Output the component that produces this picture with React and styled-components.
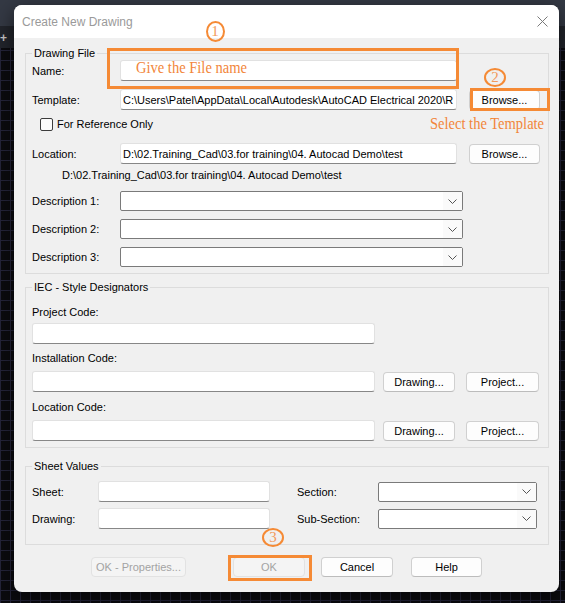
import React from "react";
import styled, { createGlobalStyle } from "styled-components";

const ORANGE = "#f58a35";
const UI_FONT = `"Liberation Sans", Arial, sans-serif`;
const NOTE_FONT = `"Liberation Serif", "Times New Roman", serif`;

const GlobalStyle = createGlobalStyle`
  html, body {
    margin: 0;
    padding: 0;
  }
  body {
    width: 565px;
    height: 603px;
    overflow: hidden;
    background-color: #0b0b0f;
    background-image:
      linear-gradient(to bottom, #343944 0, #343944 26px, #22252c 26px, #22252c 48px, transparent 48px),
      repeating-linear-gradient(to right, #24243a 0 1px, transparent 1px 10px),
      repeating-linear-gradient(to bottom, #24243a 0 1px, transparent 1px 10px);
    font-family: ${UI_FONT};
  }
`;

const Desktop = styled.div`
  position: relative;
  width: 565px;
  height: 603px;
  overflow: hidden;
`;

const PlusTab = styled.span`
  position: absolute;
  left: 0;
  top: 31px;
  color: #c8c8c8;
  font: bold 12px "Liberation Sans", sans-serif;
`;

const Dialog = styled.div`
  position: relative;
  width: 545px;
  margin: 5px 0 0 14px;
  background: #f0f0f0;
  border-radius: 8px;
  box-shadow: 0 6px 20px rgba(0, 0, 0, 0.6);
`;

const TitleBar = styled.div`
  height: 33px;
  display: flex;
  align-items: center;
  justify-content: space-between;
  padding: 0 11px 0 8px;
  background: #ffffff;
  border-radius: 8px 8px 0 0;
`;

const Title = styled.span`
  font-size: 12px;
  color: #9a9a9a;
`;

const Body = styled.div`
  padding: 8px 10px 15px 11px;
`;

const Group = styled.fieldset`
  margin: ${props => props.$mt || 0}px 0 0 0;
  padding: 0 6px ${props => props.$pb}px 6px;
  border: 1px solid #dcdcdc;
  min-width: 0;
`;

const Legend = styled.legend`
  padding: 0 2px;
  font-size: 11px;
  line-height: 14px;
  color: #000;
`;

const Row = styled.div`
  display: flex;
  align-items: center;
  height: ${props => props.$h || 21}px;
  margin-top: ${props => props.$mt || 0}px;
`;

const Label = styled.span`
  flex: none;
  width: ${props => (props.$w ? `${props.$w}px` : "auto")};
  margin-left: ${props => props.$ml || 0}px;
  font-size: 11px;
  line-height: 14px;
  color: #000;
  white-space: nowrap;
`;

const BlockLabel = styled.div`
  margin-top: ${props => props.$mt || 0}px;
  font-size: 11px;
  line-height: 14px;
  color: #000;
`;

const TextBox = styled.input`
  flex: none;
  box-sizing: border-box;
  width: ${props => props.$w}px;
  height: 21px;
  margin: 0;
  padding: 0 2px;
  background: #ffffff;
  border: 1px solid #e1e1e1;
  border-bottom-color: #878787;
  border-radius: 3px;
  font-family: ${UI_FONT};
  font-size: 11px;
  color: #000;
  outline: none;
`;

const Combo = styled.div`
  flex: none;
  display: flex;
  justify-content: flex-end;
  box-sizing: border-box;
  width: ${props => props.$w}px;
  height: 20px;
  margin-left: ${props => props.$ml || 0}px;
  background: #ffffff;
  border: 1px solid #7a7a7a;
  border-radius: 2px;
`;

const ComboArrow = styled.div`
  width: 19px;
  display: flex;
  align-items: center;
  justify-content: center;
  background: #fafafa;
`;

const Button = styled.button`
  flex: none;
  box-sizing: border-box;
  width: ${props => props.$w}px;
  height: 20px;
  margin: 0 0 0 ${props => props.$ml || 0}px;
  padding: 0;
  background: ${props => (props.disabled ? "#f4f4f4" : "#fdfdfd")};
  border: 1px solid ${props => (props.disabled ? "#e2e2e2" : "#d0d0d0")};
  border-bottom-color: ${props => (props.disabled ? "#e2e2e2" : "#bcbcbc")};
  border-radius: 4px;
  font-family: ${UI_FONT};
  font-size: 11px;
  white-space: nowrap;
  color: ${props => (props.disabled ? "#a3a3a3" : "#000")};
`;

const CheckRow = styled.label`
  display: flex;
  align-items: center;
  height: 14px;
  margin-top: 7px;
  padding-left: 8px;
  font-size: 11px;
  color: #000;
`;

const CheckBox = styled.span`
  width: 13px;
  height: 13px;
  box-sizing: border-box;
  margin-right: 4px;
  border: 1px solid #3c3c3c;
  border-radius: 2px;
  background: #fbfbfb;
`;

const PathText = styled.div`
  margin-top: 4px;
  padding-left: 30px;
  font-size: 11px;
  line-height: 14px;
  color: #000;
  white-space: nowrap;
`;

const ButtonBar = styled.div`
  display: flex;
  height: 20px;
  margin-top: 12px;
  padding-left: 66px;
`;

/* annotations drawn over the dialog */
const Highlight = styled.div`
  position: absolute;
  left: ${props => props.$x}px;
  top: ${props => props.$y}px;
  width: ${props => props.$w}px;
  height: ${props => props.$h}px;
  box-sizing: border-box;
  border: 3px solid ${ORANGE};
  pointer-events: none;
`;

const StepMark = styled.div`
  position: absolute;
  left: ${props => props.$x - props.$w / 2}px;
  top: ${props => props.$y - props.$h / 2}px;
  width: ${props => props.$w}px;
  height: ${props => props.$h}px;
  box-sizing: border-box;
  display: flex;
  align-items: center;
  justify-content: center;
  border: 2px solid ${ORANGE};
  border-radius: 50%;
  font-family: ${NOTE_FONT};
  font-size: 15px;
  line-height: 1;
  color: #f29a5c;
`;

const Note = styled.div`
  position: absolute;
  left: ${props => props.$x}px;
  top: ${props => props.$y}px;
  font-family: ${NOTE_FONT};
  font-size: 17.5px;
  line-height: 18px;
  color: #f2863a;
  white-space: nowrap;
  transform: scaleX(0.83);
  transform-origin: left center;
`;

const Chevron = () => (
  <svg width="9" height="5" viewBox="0 0 9 5">
    <polyline points="0.5,0.5 4.5,4.5 8.5,0.5" fill="none" stroke="#555" strokeWidth="1" />
  </svg>
);

const CloseIcon = () => (
  <svg width="11" height="11" viewBox="0 0 11 11">
    <path d="M0.5 0.5 L10.5 10.5 M10.5 0.5 L0.5 10.5" stroke="#7a7a7a" strokeWidth="1" />
  </svg>
);

const Select = ({ w, ml }) => (
  <Combo $w={w} $ml={ml}>
    <ComboArrow>
      <Chevron />
    </ComboArrow>
  </Combo>
);

const templatePath =
  "C:\\Users\\Patel\\AppData\\Local\\Autodesk\\AutoCAD Electrical 2020\\R";
const locationPath = "D:\\02.Training_Cad\\03.for training\\04. Autocad Demo\\test";

export default function App() {
  return (
    <>
      <GlobalStyle />
      <Desktop>
        <PlusTab>+</PlusTab>
        <Dialog>
          <TitleBar>
            <Title>Create New Drawing</Title>
            <CloseIcon />
          </TitleBar>
          <Body>
            <Group $pb={6}>
              <Legend>Drawing File</Legend>
              <Row>
                <Label $w={88}>Name:</Label>
                <TextBox $w={337} readOnly value="" />
              </Row>
              <Row $mt={8}>
                <Label $w={88}>Template:</Label>
                <TextBox $w={337} readOnly value={templatePath} />
                <Button $w={71} $ml={12}>Browse...</Button>
              </Row>
              <CheckRow>
                <CheckBox />
                For Reference Only
              </CheckRow>
              <Row $mt={12}>
                <Label $w={88}>Location:</Label>
                <TextBox $w={337} readOnly value={locationPath} />
                <Button $w={71} $ml={12}>Browse...</Button>
              </Row>
              <PathText>{locationPath}</PathText>
              <Row $mt={9} $h={20}>
                <Label $w={88}>Description 1:</Label>
                <Select w={343} />
              </Row>
              <Row $mt={8} $h={20}>
                <Label $w={88}>Description 2:</Label>
                <Select w={343} />
              </Row>
              <Row $mt={8} $h={20}>
                <Label $w={88}>Description 3:</Label>
                <Select w={343} />
              </Row>
            </Group>

            <Group $mt={6} $pb={6}>
              <Legend>IEC - Style Designators</Legend>
              <BlockLabel $mt={11}>Project Code:</BlockLabel>
              <Row $mt={4}>
                <TextBox $w={343} readOnly value="" />
              </Row>
              <BlockLabel $mt={7}>Installation Code:</BlockLabel>
              <Row $mt={6}>
                <TextBox $w={343} readOnly value="" />
                <Button $w={72} $ml={8}>Drawing...</Button>
                <Button $w={73} $ml={11}>Project...</Button>
              </Row>
              <BlockLabel $mt={8}>Location Code:</BlockLabel>
              <Row $mt={6}>
                <TextBox $w={343} readOnly value="" />
                <Button $w={72} $ml={8}>Drawing...</Button>
                <Button $w={73} $ml={11}>Project...</Button>
              </Row>
            </Group>

            <Group $mt={11} $pb={15}>
              <Legend>Sheet Values</Legend>
              <Row $mt={8}>
                <Label $w={66}>Sheet:</Label>
                <TextBox $w={172} readOnly value="" />
                <Label $w={81} $ml={27}>Section:</Label>
                <Select w={159} />
              </Row>
              <Row $mt={6}>
                <Label $w={66}>Drawing:</Label>
                <TextBox $w={172} readOnly value="" />
                <Label $w={81} $ml={27}>Sub-Section:</Label>
                <Select w={159} />
              </Row>
            </Group>

            <ButtonBar>
              <Button $w={95} disabled>OK - Properties...</Button>
              <Button $w={72} $ml={47} disabled>OK</Button>
              <Button $w={72} $ml={16}>Cancel</Button>
              <Button $w={71} $ml={18}>Help</Button>
            </ButtonBar>
          </Body>

          <Highlight $x={93} $y={43} $w={352} $h={41} />
          <StepMark $x={201} $y={26} $w={19} $h={21}>1</StepMark>
          <Note $x={122} $y={53}>Give the File name</Note>

          <Highlight $x={456} $y={83} $w={80} $h={23} />
          <StepMark $x={481} $y={72} $w={22} $h={19}>2</StepMark>
          <Note $x={416} $y={109}>Select the Template</Note>

          <Highlight $x={214} $y={550} $w={84} $h={26} />
          <StepMark $x={259} $y={532} $w={22} $h={19}>3</StepMark>
        </Dialog>
      </Desktop>
    </>
  );
}
